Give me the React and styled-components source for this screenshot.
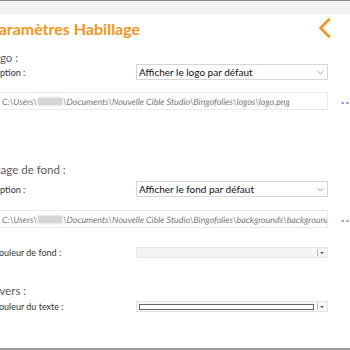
import React from "react";
import styled, { createGlobalStyle } from "styled-components";

const Global = createGlobalStyle`
  html, body { margin: 0; padding: 0; background: #fff; overflow: hidden; }
  body { width: 350px; height: 350px; font-family: Lato, "Open Sans", sans-serif; }
`;

const Frame = styled.div`
  width: 350px;
  height: 350px;
  display: flex;
  flex-direction: column;
  overflow: hidden;
`;

const TopStrip = styled.div`
  height: 13px;
  flex: none;
  background: #f2f2f2;
  border-top: 1px solid #8c8c8c;
`;

const Content = styled.div`
  flex: 1;
  margin-left: -12px;
  width: 380px;
  display: flex;
  flex-direction: column;
`;

const Header = styled.div`
  display: flex;
  align-items: center;
  justify-content: space-between;
  height: 28px;
  padding-right: 36px;
`;

const Title = styled.h1`
  margin: 0;
  margin-left: 1px;
  font-size: 16px;
  font-weight: 700;
  color: #f7941d;
`;

const Heading = styled.div`
  font-size: 11.5px;
  color: #5b5b5b;
  margin-top: ${(p) => p.$mt}px;
  height: 16px;
  line-height: 16px;
`;

const Row = styled.div`
  display: grid;
  grid-template-columns: 148px 192px 1fr;
  align-items: center;
  margin-top: ${(p) => p.$mt}px;
`;

const Label = styled.span`
  padding-left: 5px;
  font-size: 9px;
  color: #333;
`;

const Select = styled.div`
  height: 16px;
  box-sizing: border-box;
  border: 1px solid #d6d6d6;
  display: flex;
  align-items: center;
  justify-content: space-between;
  padding: 0 3px 0 2px;
  font-size: 10px;
  color: #111;
  background: #fff;
`;

const PathRow = styled.div`
  display: grid;
  grid-template-columns: 340px 1fr;
  align-items: center;
  margin-top: ${(p) => p.$mt}px;
`;

const PathBox = styled.div`
  height: 18px;
  box-sizing: border-box;
  border: 1px solid #ebebeb;
  display: flex;
  align-items: center;
  padding-left: 11px;
  margin-left: 2px;
  font-size: 8.85px;
  text-rendering: geometricPrecision;
  font-style: italic;
  color: #777;
  white-space: nowrap;
  overflow: hidden;
`;

const Redacted = styled.span`
  display: inline-block;
  flex: none;
  width: 24px;
  height: 7px;
  margin: 0 1px;
  background: #d6d6d6;
  box-shadow: 0 0 2px 1px #e4e4e4;
  border-radius: 1px;
`;

const Dots = styled.span`
  padding-left: 13px;
  font-size: 14px;
  font-weight: 900;
  color: #8585e4;
  letter-spacing: 1.5px;
  line-height: 10px;
  margin-top: -4px;
`;

const ColorBox = styled.div`
  height: 11px;
  box-sizing: border-box;
  border: 1px solid ${(p) => (p.$disabled ? "#e8e8e8" : "#e2e2e2")};
  background: ${(p) => (p.$disabled ? "#f5f5f5" : "#f7f7f7")};
  display: flex;
  align-items: center;
  padding: 0 2px;
`;

const Swatch = styled.div`
  flex: 1;
  height: 6px;
  box-sizing: border-box;
  border: 1px solid ${(p) => (p.$empty ? "transparent" : "#666")};
  background: ${(p) => (p.$empty ? "transparent" : "#fff")};
`;

const DropSep = styled.div`
  width: 1px;
  height: 7px;
  background: #bbb;
  margin: 0 2px 0 3px;
`;

const Tri = styled.div`
  width: 0;
  height: 0;
  border-left: 2px solid transparent;
  border-right: 2px solid transparent;
  border-top: 2px solid #555;
  margin-right: 1px;
`;

const Spacer = styled.div`
  flex: 1;
`;

const BottomLine = styled.div`
  height: 2px;
  background: #9a9a9a;
  flex: none;
`;

const Chevron = () => (
  <svg width="14" height="20" viewBox="0 0 14 20">
    <polyline points="11,1.5 2.5,10 11,18.5" fill="none" stroke="#f7941d" strokeWidth="2.6" strokeLinecap="round" strokeLinejoin="round" />
  </svg>
);

const SelectArrow = () => (
  <svg width="7" height="5" viewBox="0 0 7 5">
    <polyline points="0.5,1 3.5,4 6.5,1" fill="none" stroke="#999" strokeWidth="0.9" />
  </svg>
);

const ColorPicker = ({ disabled }) => (
  <ColorBox $disabled={disabled}>
    <Swatch $empty={disabled} />
    <DropSep />
    <Tri />
  </ColorBox>
);

export default function App() {
  return (
    <Frame>
      <Global />
      <TopStrip />
      <Content>
        <Header>
          <Title>Paramètres Habillage</Title>
          <Chevron />
        </Header>

        <Heading $mt={8}>Logo :</Heading>
        <Row $mt={-2}>
          <Label>Option :</Label>
          <Select>
            <span>Afficher le logo par défaut</span>
            <SelectArrow />
          </Select>
        </Row>
        <PathRow $mt={12}>
          <PathBox>
            C:\Users\<Redacted />\Documents\Nouvelle Cible Studio\Bingofolies\logos\logo.png
          </PathBox>
          <Dots>...</Dots>
        </PathRow>

        <Heading $mt={52}>Image de fond :</Heading>
        <Row $mt={3}>
          <Label>Option :</Label>
          <Select>
            <span>Afficher le fond par défaut</span>
            <SelectArrow />
          </Select>
        </Row>
        <PathRow $mt={13}>
          <PathBox>
            C:\Users\<Redacted />\Documents\Nouvelle Cible Studio\Bingofolies\backgrounds\background1.jpg
          </PathBox>
          <Dots>...</Dots>
        </PathRow>

        <Row $mt={19}>
          <Label>Couleur de fond :</Label>
          <ColorPicker disabled />
        </Row>

        <Heading $mt={25}>Divers :</Heading>
        <Row $mt={2}>
          <Label>Couleur du texte :</Label>
          <ColorPicker />
        </Row>
        <Spacer />
      </Content>
      <BottomLine />
    </Frame>
  );
}
